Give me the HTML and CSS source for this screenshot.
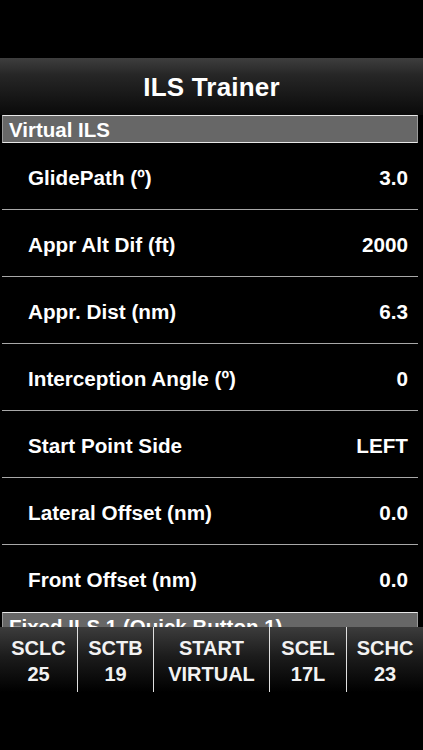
FILE: index.html
```html
<!DOCTYPE html>
<html lang="en">
<head>
  <meta charset="UTF-8">
  <title>ILS Trainer</title>
  <link rel="stylesheet" href="styles.css">
</head>
<body>

  <div class="statusbar"></div>

  <div class="navbar">
    <h1>ILS Trainer</h1>
  </div>

  <div class="content">
    <div class="section">Virtual ILS</div>

    <div class="row"><span>GlidePath (º)</span><span>3.0</span></div>
    <div class="row"><span>Appr Alt Dif (ft)</span><span>2000</span></div>
    <div class="row"><span>Appr. Dist (nm)</span><span>6.3</span></div>
    <div class="row"><span>Interception Angle (º)</span><span>0</span></div>
    <div class="row"><span>Start Point Side</span><span>LEFT</span></div>
    <div class="row"><span>Lateral Offset (nm)</span><span>0.0</span></div>
    <div class="row last"><span>Front Offset (nm)</span><span>0.0</span></div>

    <div class="section">Fixed ILS 1 (Quick Button 1)</div>
  </div>

  <div class="tabbar">
    <button class="tab">SCLC<br>25</button>
    <button class="tab">SCTB<br>19</button>
    <button class="tab">START<br>VIRTUAL</button>
    <button class="tab">SCEL<br>17L</button>
    <button class="tab">SCHC<br>23</button>
  </div>

</body>
</html>
```

FILE: styles.css
```css
body {
  margin: 0;
  width: 423px;
  height: 750px;
  background: #000;
  color: #fff;
  font-family: "Liberation Sans", Arial, sans-serif;
  font-weight: bold;
  overflow: hidden;
}
.statusbar {
  height: 58px;
}
.navbar {
  height: 57px;
  background: linear-gradient(#3e3e3e, #262626 30%, #0a0a0a);
  display: flex;
  align-items: center;
  justify-content: center;
}
.navbar h1 {
  margin: 2px 0 0;
  font-size: 26px;
  letter-spacing: 0.2px;
}
.content {
  height: 512px;
  overflow: hidden;
}
.section {
  margin: 0 5px 0 2px;
  height: 26px;
  line-height: 27px;
  padding-left: 6px;
  background: #676767;
  border-top: 1px solid #e8e8e8;
  border-bottom: 1px solid #e8e8e8;
  border-left: 1px solid #9a9a9a;
  border-right: 1px solid #9a9a9a;
  font-size: 20.5px;
  white-space: nowrap;
  overflow: hidden;
}
.row {
  margin: 0 5px 0 2px;
  height: 63px;
  padding: 3px 10px 0 26px;
  display: flex;
  align-items: center;
  justify-content: space-between;
  border-bottom: 1px solid #a8a8a8;
  font-size: 20.7px;
}
.row.last {
  border-bottom: 1px solid #000;
}
.tabbar {
  height: 65px;
  display: grid;
  grid-template-columns: 78px 76px 116px 77px 1fr;
  background: linear-gradient(#3c3c3c, #1c1c1c 45%, #000);
}
.tab {
  background: none;
  border: 0;
  border-right: 1px solid #e0e0e0;
  padding: 2px 0 0;
  color: #f2f2f2;
  font-family: inherit;
  font-weight: bold;
  font-size: 20px;
  line-height: 26px;
  text-align: center;
  align-self: stretch;
  display: block;
}
.tab:last-child {
  border-right: 0;
}
```
